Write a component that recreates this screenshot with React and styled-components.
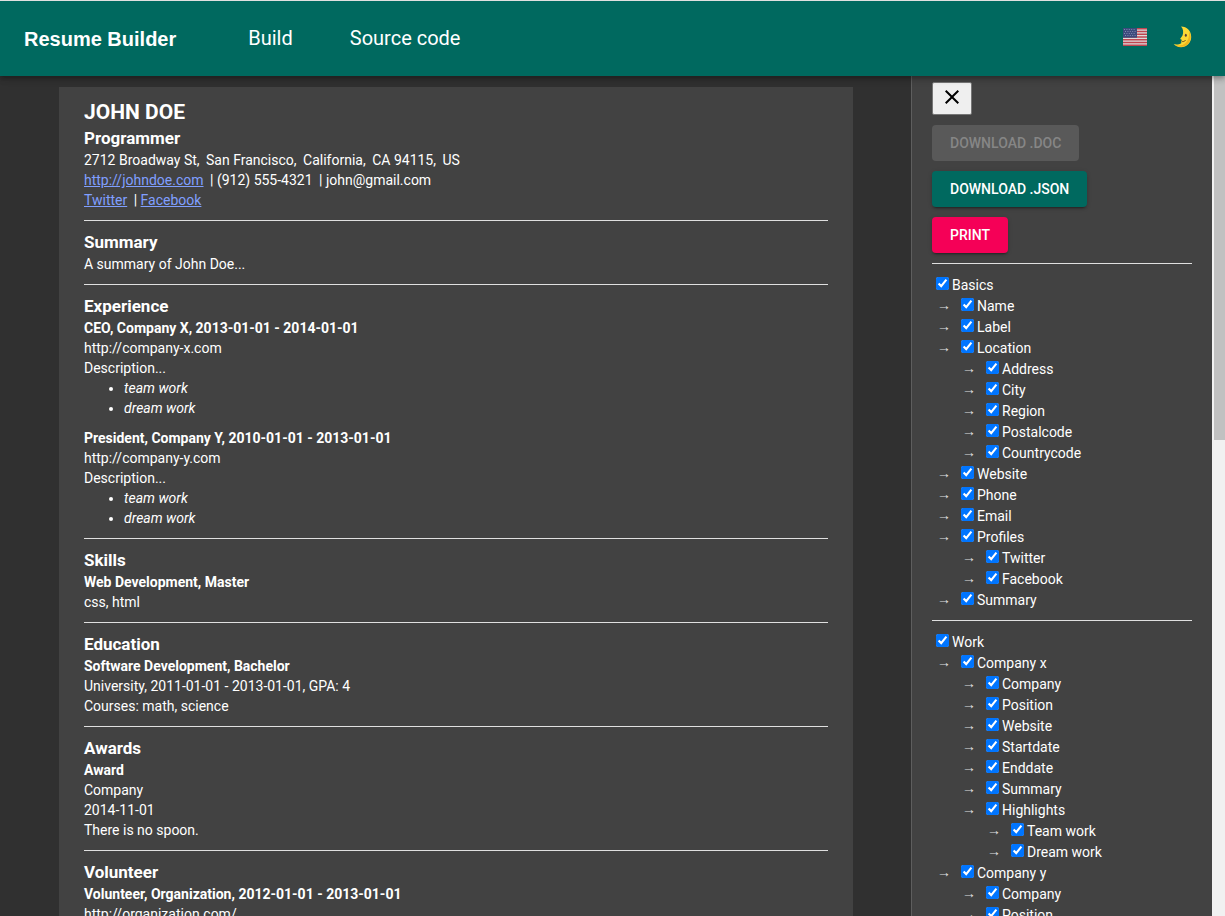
import React from "react";
import styled, { createGlobalStyle, css } from "styled-components";

const GlobalStyle = createGlobalStyle`
  * { box-sizing: border-box; }
  body {
    margin: 0;
    background: #303030;
    color: #fff;
    font: 400 14px/20px Roboto, "Liberation Sans", sans-serif;
  }
  h1, h2, h3, p, ul { margin: 0; }
`;

const Page = styled.div`
  display: flex;
  flex-direction: column;
  height: 100vh;
  overflow: hidden;
`;

const Header = styled.header`
  position: relative;
  z-index: 2;
  flex: none;
  display: flex;
  align-items: center;
  height: 76px;
  padding: 0 33px 0 24px;
  border-top: 1px solid #e0e0e0;
  background: #00695f;
  box-shadow: 0 2px 4px -1px rgba(0, 0, 0, 0.2), 0 4px 5px rgba(0, 0, 0, 0.14),
    0 1px 10px rgba(0, 0, 0, 0.12);
`;

const Brand = styled.a`
  color: #fff;
  font: 700 20px/24px "Liberation Sans", sans-serif;
  text-decoration: none;
  margin-right: 72px;
`;

const Nav = styled.nav`
  display: flex;
  gap: 57px;
  flex: 1;
  padding-bottom: 2px;
`;

const NavLink = styled.a`
  color: #fff;
  font-size: 20px;
  line-height: 28px;
  text-decoration: none;
`;

const Tools = styled.div`
  display: flex;
  align-items: center;
  gap: 26px;
  padding-bottom: 4px;
`;

const IconButton = styled.button`
  display: flex;
  padding: 0;
  border: 0;
  background: none;
  cursor: pointer;
`;

const Body = styled.div`
  flex: 1;
  min-height: 0;
  display: flex;
`;

const Main = styled.main`
  flex: 1;
  min-width: 0;
  padding: 11px 58px 0 59px;
  overflow: hidden;
`;

const Sheet = styled.article`
  padding: 11px 25px;
  background: #424242;
`;

const Section = styled.section`
  & + & {
    margin-top: 10px;
    padding-top: 10px;
    border-top: 1px solid #e0e0e0;
  }
`;

const Name = styled.h1`
  font-size: 21px;
  line-height: 29px;
  font-weight: 700;
  text-transform: uppercase;
`;

const Heading = styled.h2`
  font-size: 17px;
  line-height: 23px;
  font-weight: 700;
`;

const Entry = styled.div`
  & + & {
    margin-top: 10px;
  }
`;

const EntryTitle = styled.h3`
  font-size: 14px;
  line-height: 20px;
  font-weight: 700;
`;

const Detail = styled.span`
  & + & {
    margin-left: 3px;
  }
`;

const Link = styled.a`
  color: #809fff;
`;

const Highlights = styled.ul`
  padding-left: 40px;
  font-style: italic;
`;

const Sidebar = styled.aside`
  flex: none;
  width: 301px;
  padding: 6px 20px 0;
  overflow: hidden;
  background: #424242;
  border-left: 1px solid #5e5e5e;
`;

const ButtonStack = styled.div`
  display: flex;
  flex-direction: column;
  align-items: flex-start;
  gap: 10px;
`;

const CloseButton = styled.button`
  display: flex;
  align-items: center;
  justify-content: center;
  width: 40px;
  height: 33px;
  padding: 0 0 4px;
  border: 1px solid #767676;
  border-radius: 2px;
  background: #efefef;
  color: #000;
`;

const tones = {
  primary: css`
    background: #00695f;
    color: #fff;
  `,
  secondary: css`
    background: #f50057;
    color: #fff;
  `,
};

const ActionButton = styled.button`
  height: 36px;
  padding: 0 18px;
  border: 0;
  border-radius: 4px;
  font: 500 14px/24px Roboto, "Liberation Sans", sans-serif;
  text-transform: uppercase;
  box-shadow: 0 3px 1px -2px rgba(0, 0, 0, 0.2), 0 2px 2px rgba(0, 0, 0, 0.14),
    0 1px 5px rgba(0, 0, 0, 0.12);
  ${(p) => tones[p.$tone]}
  &:disabled {
    background: #595959;
    color: #868686;
    box-shadow: none;
  }
`;

const Group = styled.section`
  margin-top: 10px;
  padding-top: 10px;
  border-top: 1px solid #e0e0e0;
`;

const TreeRow = styled.div`
  display: flex;
  align-items: center;
  height: 21px;
  padding-left: ${(p) => Math.max(p.$depth - 1, 0) * 25}px;
`;

const Arrow = styled.span`
  width: 25px;
  padding: 0 0 2px 5px;
  color: #e0e0e0;
`;

const Option = styled.label`
  display: flex;
  align-items: center;
`;

const Tick = styled.input`
  width: 13px;
  height: 13px;
  margin: 0 3px 2px 4px;
`;

const ScrollTrack = styled.div`
  flex: none;
  width: 13px;
  padding-left: 2px;
  background: #f1f1f1;
`;

const ScrollThumb = styled.div`
  height: 44%;
  max-height: 364px;
  background: #c1c1c1;
`;

const FlagIcon = () => (
  <svg width="24" height="18" viewBox="0 0 24 18" aria-hidden="true">
    <path fill="#dcdcdc" d="M0 0h24v18H0z" />
    <path
      stroke="#c04550"
      strokeWidth="1.400"
      d="M0 .7h24M0 3.500h24M0 6.200h24M0 9h24M0 11.800h24M0 14.500h24M0 17.300h24"
    />
    <path fill="#3c4a7c" d="M0 0h14v9.700H0z" />
    <path
      stroke="#7f89b0"
      strokeWidth="1"
      strokeDasharray="1 1.400"
      d="M1 1.500h12M2 3.500h11M1 5.500h12M2 7.500h11"
    />
  </svg>
);

const MoonIcon = () => (
  <svg width="19" height="22" viewBox="0 0 19 22" aria-hidden="true">
    <path
      fill="#fdd835"
      d="M8 .6C14 .8 18.200 5 18.200 11c0 6-4.600 10.200-10.200 10.200-3.200 0-5.800-1.200-7.300-3.100 2.900.8 5.900.2 7.700-1.200l-.5-1.800 1-.5-.5-1.200-1.300-.5 2.400-3.300C10.800 6.200 10.200 2.800 8 .6z"
    />
    <path fill="#f2b61c" d="M16 5.500c3 4.500 2 11-3 14-3 1.800-8 1.800-11-.5 4 1 8 .5 10.500-2s4-6 3.500-11.500z" />
    <ellipse cx="12.800" cy="9.300" rx="1" ry="1.500" fill="#5d4037" />
    <path fill="none" stroke="#6d4c1b" d="M8.600 15.300c1.500.7 3 .2 3.900-1.100" />
  </svg>
);

const CloseIcon = () => (
  <svg width="24" height="24" viewBox="0 0 24 24" fill="currentColor" aria-hidden="true">
    <path d="M19 6.410L17.590 5 12 10.590 6.410 5 5 6.410 10.590 12 5 17.590 6.410 19 12 13.410 17.590 19 19 17.590 13.410 12z" />
  </svg>
);

const address = ["2712 Broadway St, ", "San Francisco, ", "California, ", "CA 94115, ", "US"];

const jobs = [
  {
    title: "CEO, Company X, 2013-01-01 - 2014-01-01",
    site: "http://company-x.com",
  },
  {
    title: "President, Company Y, 2010-01-01 - 2013-01-01",
    site: "http://company-y.com",
  },
];

const records = [
  { heading: "Skills", title: "Web Development, Master", lines: ["css, html"] },
  {
    heading: "Education",
    title: "Software Development, Bachelor",
    lines: ["University, 2011-01-01 - 2013-01-01, GPA: 4", "Courses: math, science"],
  },
  {
    heading: "Awards",
    title: "Award",
    lines: ["Company", "2014-11-01", "There is no spoon."],
  },
  {
    heading: "Volunteer",
    title: "Volunteer, Organization, 2012-01-01 - 2013-01-01",
    lines: ["http://organization.com/"],
  },
];

const groups = [
  [
    [0, "Basics"],
    [1, "Name"],
    [1, "Label"],
    [1, "Location"],
    [2, "Address"],
    [2, "City"],
    [2, "Region"],
    [2, "Postalcode"],
    [2, "Countrycode"],
    [1, "Website"],
    [1, "Phone"],
    [1, "Email"],
    [1, "Profiles"],
    [2, "Twitter"],
    [2, "Facebook"],
    [1, "Summary"],
  ],
  [
    [0, "Work"],
    [1, "Company x"],
    [2, "Company"],
    [2, "Position"],
    [2, "Website"],
    [2, "Startdate"],
    [2, "Enddate"],
    [2, "Summary"],
    [2, "Highlights"],
    [3, "Team work"],
    [3, "Dream work"],
    [1, "Company y"],
    [2, "Company"],
    [2, "Position"],
  ],
];

export default function App() {
  return (
    <Page>
      <GlobalStyle />
      <Header>
        <Brand href="#home">Resume Builder</Brand>
        <Nav>
          <NavLink href="#build">Build</NavLink>
          <NavLink href="#source">Source code</NavLink>
        </Nav>
        <Tools>
          <IconButton aria-label="Language">
            <FlagIcon />
          </IconButton>
          <IconButton aria-label="Dark mode">
            <MoonIcon />
          </IconButton>
        </Tools>
      </Header>
      <Body>
        <Main>
          <Sheet>
            <Section>
              <Name>John Doe</Name>
              <Heading>Programmer</Heading>
              <p>
                {address.map((part) => (
                  <Detail key={part}>{part}</Detail>
                ))}
              </p>
              <p>
                <Detail>
                  <Link href="#site">http://johndoe.com</Link>{" "}
                </Detail>
                <Detail>| (912) 555-4321 </Detail>
                <Detail>| john@gmail.com</Detail>
              </p>
              <p>
                <Detail>
                  <Link href="#twitter">Twitter</Link>{" "}
                </Detail>
                <Detail>
                  | <Link href="#facebook">Facebook</Link>
                </Detail>
              </p>
            </Section>
            <Section>
              <Heading>Summary</Heading>
              <p>A summary of John Doe...</p>
            </Section>
            <Section>
              <Heading>Experience</Heading>
              {jobs.map((job) => (
                <Entry key={job.title}>
                  <EntryTitle>{job.title}</EntryTitle>
                  <p>{job.site}</p>
                  <p>Description...</p>
                  <Highlights>
                    <li>team work</li>
                    <li>dream work</li>
                  </Highlights>
                </Entry>
              ))}
            </Section>
            {records.map((record) => (
              <Section key={record.heading}>
                <Heading>{record.heading}</Heading>
                <EntryTitle>{record.title}</EntryTitle>
                {record.lines.map((line) => (
                  <p key={line}>{line}</p>
                ))}
              </Section>
            ))}
          </Sheet>
        </Main>
        <Sidebar>
          <ButtonStack>
            <CloseButton aria-label="Close">
              <CloseIcon />
            </CloseButton>
            <ActionButton disabled>Download .doc</ActionButton>
            <ActionButton $tone="primary">Download .json</ActionButton>
            <ActionButton $tone="secondary">Print</ActionButton>
          </ButtonStack>
          {groups.map((rows) => (
            <Group key={rows[0][1]}>
              {rows.map(([depth, label], i) => (
                <TreeRow key={i} $depth={depth}>
                  {depth > 0 && <Arrow aria-hidden="true">→</Arrow>}
                  <Option>
                    <Tick type="checkbox" defaultChecked />
                    {label}
                  </Option>
                </TreeRow>
              ))}
            </Group>
          ))}
        </Sidebar>
        <ScrollTrack>
          <ScrollThumb />
        </ScrollTrack>
      </Body>
    </Page>
  );
}
